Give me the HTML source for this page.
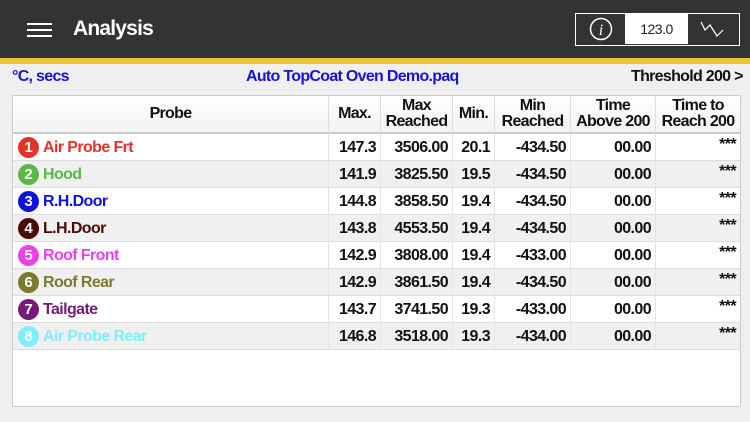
<!DOCTYPE html>
<html><head><meta charset="utf-8"><style>
*{margin:0;padding:0;box-sizing:border-box}
body{width:750px;height:422px;overflow:hidden;background:#efefef;font-family:"Liberation Sans",Arial,sans-serif;position:relative}
.hdr{position:absolute;left:0;top:0;width:750px;height:58px;background:#333}
.ys{position:absolute;left:0;top:58px;width:750px;height:6px;background:#f0c23c}
.ham{position:absolute;left:27px;width:25px;height:2px;background:#fff}
.title{position:absolute;left:73px;top:17px;color:#fff;font-size:21px;font-weight:bold;letter-spacing:-0.8px}
.grp{position:absolute;left:575px;top:13px;width:165px;height:33px;border:1.5px solid #fff;background:#333}
.mid{position:absolute;left:49px;top:0;width:63px;height:30px;background:#fff;font-size:14px;text-align:center;line-height:30px;color:#222;letter-spacing:-0.5px}
.sub{position:absolute;top:68px;font-size:16px;font-weight:bold;letter-spacing:-0.7px}
.tbl{position:absolute;left:12px;top:95px;width:729px;height:312px;background:#fff;border:1px solid #ccc}
.th{position:absolute;top:0;height:38px;background:linear-gradient(#fff,#f3f3f3);border-right:1px solid #ddd;border-bottom:2px solid #ccc;font-size:16px;font-weight:bold;text-align:center;display:flex;align-items:center;justify-content:center;line-height:16px;letter-spacing:-0.7px;color:#111}
.row{position:absolute;left:0;width:727px;height:27px;border-bottom:1px solid #ddd}
.c{position:absolute;top:0;height:27px;line-height:28px;font-size:16px;font-weight:bold;text-align:right;padding-right:4px;border-right:1px solid #e4e4e4;letter-spacing:-0.6px;color:#111}
.dot{position:absolute;left:5px;top:3px;width:21px;height:21px;border-radius:50%;color:#fff;font-size:15px;line-height:21px;text-align:center;font-weight:bold;letter-spacing:0}
.nm{position:absolute;left:30px;top:0;line-height:28px;font-size:16px;font-weight:bold;letter-spacing:-0.6px}
</style></head><body>
<div class="hdr">
<div class="ham" style="top:23px"></div><div class="ham" style="top:29px"></div><div class="ham" style="top:35px"></div>
<div class="title">Analysis</div>
<div class="grp">
<svg style="position:absolute;left:13px;top:3px" width="24" height="24" viewBox="0 0 24 24"><circle cx="12" cy="12" r="10.5" fill="none" stroke="#fff" stroke-width="1.5"/><text x="12" y="18" font-family="Liberation Serif" font-style="italic" font-size="16" fill="#fff" text-anchor="middle">i</text></svg>
<div class="mid">123.0</div>
<svg style="position:absolute;left:124px;top:6px" width="26" height="18" viewBox="0 0 26 18"><polyline points="1,2 5,10 10,5 17,16 23,10" fill="none" stroke="#fff" stroke-width="1.2"/></svg>
</div>
</div>
<div class="ys"></div>
<div class="sub" style="left:12px;color:#1515d0">°C, secs</div>
<div class="sub" style="left:246px;color:#1515d0">Auto TopCoat Oven Demo.paq</div>
<div class="sub" style="left:631px;color:#111">Threshold 200 &gt;</div>
<div class="tbl">
<div class="th" style="left:0;width:316px">Probe</div>
<div class="th" style="left:316px;width:52px">Max.</div>
<div class="th" style="left:368px;width:72px">Max<br>Reached</div>
<div class="th" style="left:440px;width:42px">Min.</div>
<div class="th" style="left:482px;width:76px">Min<br>Reached</div>
<div class="th" style="left:558px;width:85px">Time<br>Above 200</div>
<div class="th" style="left:643px;width:84px;border-right:none">Time to<br>Reach 200</div>
<div id="rows"></div>
</div>
<script>
var d=[["Air Probe Frt","#e2332a","147.3","3506.00","20.1","-434.50"],
["Hood","#58b944","141.9","3825.50","19.5","-434.50"],
["R.H.Door","#1010dd","144.8","3858.50","19.4","-434.50"],
["L.H.Door","#4a0a08","143.8","4553.50","19.4","-434.50"],
["Roof Front","#ea40ea","142.9","3808.00","19.4","-433.00"],
["Roof Rear","#7a7a30","142.9","3861.50","19.4","-434.50"],
["Tailgate","#761c78","143.7","3741.50","19.3","-433.00"],
["Air Probe Rear","#7eeefa","146.8","3518.00","19.3","-434.00"]];
var h="";
d.forEach(function(r,i){
h+='<div class="row" style="top:'+(38+i*27)+'px;background:'+(i%2?'#f0f0f0':'#fff')+'">'+
'<div class="c" style="left:0;width:316px"><div class="dot" style="background:'+r[1]+'">'+(i+1)+'</div><div class="nm" style="color:'+r[1]+'">'+r[0]+'</div></div>'+
'<div class="c" style="left:316px;width:52px">'+r[2]+'</div>'+
'<div class="c" style="left:368px;width:72px">'+r[3]+'</div>'+
'<div class="c" style="left:440px;width:42px">'+r[4]+'</div>'+
'<div class="c" style="left:482px;width:76px">'+r[5]+'</div>'+
'<div class="c" style="left:558px;width:85px">00.00</div>'+
'<div class="c" style="left:643px;width:84px;border-right:none;line-height:22px">***</div></div>';
});
document.getElementById("rows").innerHTML=h;
</script>
</body></html>
